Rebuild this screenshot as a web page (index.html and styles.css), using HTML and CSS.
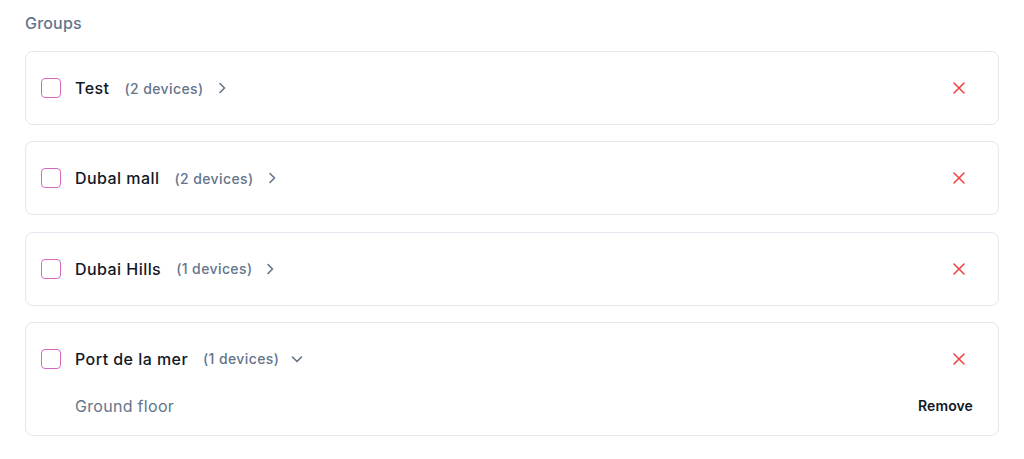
FILE: index.html
```html
<!DOCTYPE html>
<html>
<head>
<meta charset="utf-8">
<link rel="stylesheet" href="styles.css">
</head>
<body>
<div class="page">
  <h2 class="title">Groups</h2>
  <div class="list">
    <div class="card">
      <div class="row">
        <span class="check"></span>
        <span class="name">Test</span>
        <span class="count">(2 devices)</span>
        <svg class="chev" width="16" height="16" viewBox="0 0 16 16"><path d="M6 3.5l4.5 4.5-4.5 4.5" fill="none" stroke="#64748b" stroke-width="1.6" stroke-linecap="round" stroke-linejoin="round"/></svg>
        <svg class="close" width="12" height="12" viewBox="0 0 12 12"><path d="M1 1l10 10M11 1L1 11" stroke="#ef4444" stroke-width="1.6" stroke-linecap="round"/></svg>
      </div>
    </div>
    <div class="card">
      <div class="row">
        <span class="check"></span>
        <span class="name">Dubal mall</span>
        <span class="count">(2 devices)</span>
        <svg class="chev" width="16" height="16" viewBox="0 0 16 16"><path d="M6 3.5l4.5 4.5-4.5 4.5" fill="none" stroke="#64748b" stroke-width="1.6" stroke-linecap="round" stroke-linejoin="round"/></svg>
        <svg class="close" width="12" height="12" viewBox="0 0 12 12"><path d="M1 1l10 10M11 1L1 11" stroke="#ef4444" stroke-width="1.6" stroke-linecap="round"/></svg>
      </div>
    </div>
    <div class="card">
      <div class="row">
        <span class="check"></span>
        <span class="name">Dubai Hills</span>
        <span class="count">(1 devices)</span>
        <svg class="chev" width="16" height="16" viewBox="0 0 16 16"><path d="M6 3.5l4.5 4.5-4.5 4.5" fill="none" stroke="#64748b" stroke-width="1.6" stroke-linecap="round" stroke-linejoin="round"/></svg>
        <svg class="close" width="12" height="12" viewBox="0 0 12 12"><path d="M1 1l10 10M11 1L1 11" stroke="#ef4444" stroke-width="1.6" stroke-linecap="round"/></svg>
      </div>
    </div>
    <div class="card expanded">
      <div class="row">
        <span class="check"></span>
        <span class="name">Port de la mer</span>
        <span class="count">(1 devices)</span>
        <svg class="chev" width="16" height="16" viewBox="0 0 16 16"><path d="M3.5 6l4.5 4.5 4.5-4.5" fill="none" stroke="#64748b" stroke-width="1.6" stroke-linecap="round" stroke-linejoin="round"/></svg>
        <svg class="close" width="12" height="12" viewBox="0 0 12 12"><path d="M1 1l10 10M11 1L1 11" stroke="#ef4444" stroke-width="1.6" stroke-linecap="round"/></svg>
      </div>
      <div class="sub">
        <span class="subname">Ground floor</span>
        <span class="remove">Remove</span>
      </div>
    </div>
  </div>
</div>
</body>
</html>
```

FILE: styles.css
```css
* { box-sizing: border-box; }
html, body { margin: 0; padding: 0; background: #ffffff; }
body { font-family: Inter, "Noto Sans", sans-serif; color: #111827; }
.page { padding: 12px 25px 0 25px; }
.title {
  margin: 0 0 17px 0;
  font-size: 16px;
  line-height: 22px;
  font-weight: 500;
  color: #64748b;
  letter-spacing: 0.2px;
}
.list { display: flex; flex-direction: column; gap: 16.33px; }
.card {
  border: 1px solid #e2e8f0;
  border-radius: 8px;
  padding: 24px 24px 24px 14px;
  background: #fff;
}
.card.expanded { padding-bottom: 17px; }
.row {
  display: flex;
  align-items: center;
  height: 24px;
}
.check {
  width: 20px;
  height: 20px;
  border: 1.6px solid #d56ac0;
  border-radius: 4px;
  flex: none;
  margin-left: 1px;
}
.name {
  margin-left: 14px;
  font-size: 16px;
  font-weight: 550;
  letter-spacing: 0.45px;
  color: #111827;
}
.count {
  margin-left: 15px;
  font-size: 14px;
  font-weight: 500;
  letter-spacing: 0.4px;
  color: #64748b;
}
.chev { margin-left: 10px; flex: none; }
.close { margin-left: auto; margin-right: 9px; flex: none; }
.sub {
  display: flex;
  align-items: center;
  justify-content: space-between;
  margin-top: 23px;
  padding-left: 35px;
  height: 24px;
}
.subname { font-size: 16px; color: #64748b; letter-spacing: 0.3px; }
.remove { font-size: 14px; font-weight: 600; color: #111827; margin-right: 1px; letter-spacing: 0.1px; }
```
